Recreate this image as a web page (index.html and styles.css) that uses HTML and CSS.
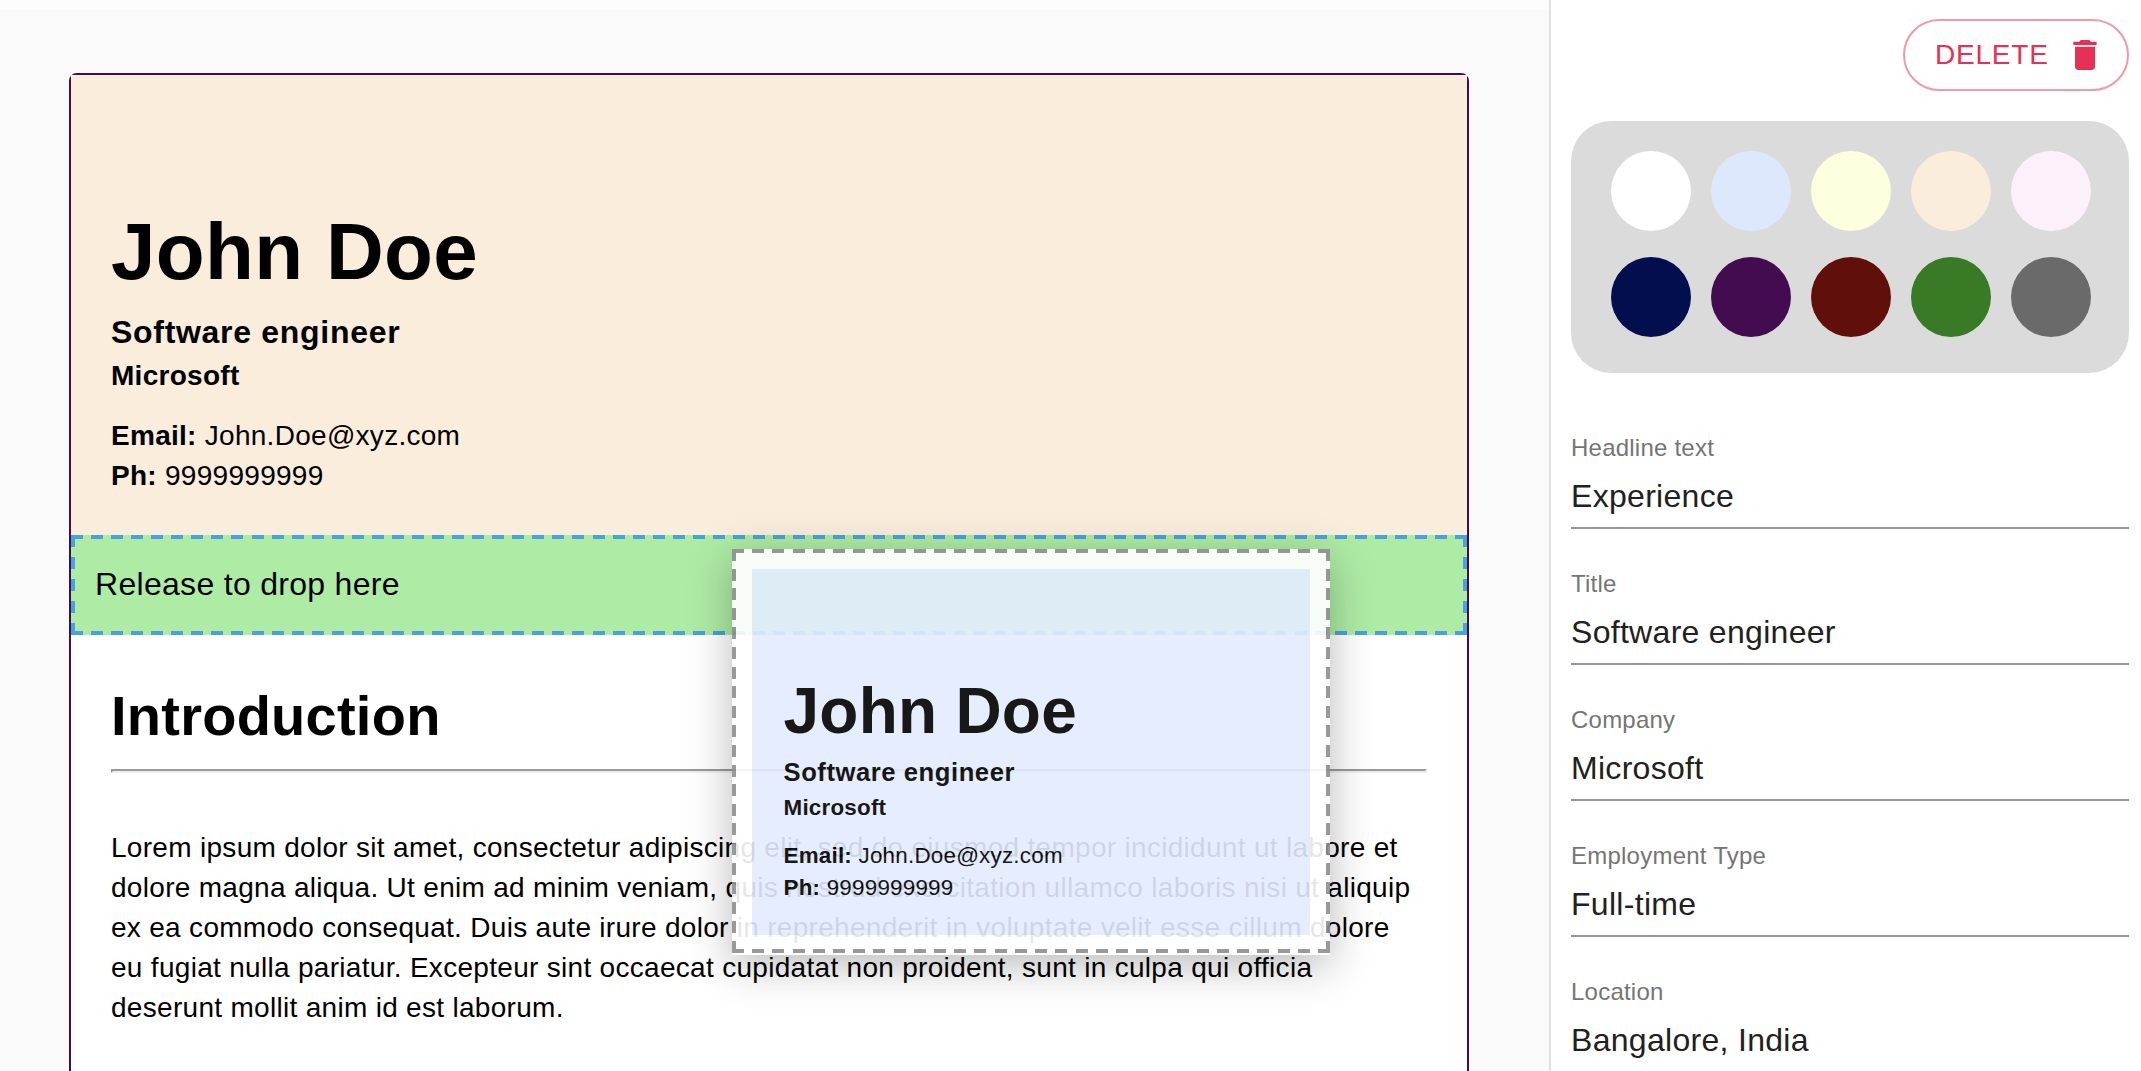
FILE: index.html
```html
<!DOCTYPE html>
<html lang="en">
<head>
<meta charset="utf-8">
<title>Resume builder</title>
<link rel="stylesheet" href="styles.css">
</head>
<body>
<div class="app">
  <main class="workspace">
    <div class="topbar"></div>
    <article class="page">
      <header class="intro">
        <h1 class="name">John Doe</h1>
        <h2 class="role">Software engineer</h2>
        <h3 class="company">Microsoft</h3>
        <p class="contact"><b>Email:</b> John.Doe@xyz.com<br><b>Ph:</b> 9999999999</p>
      </header>
      <div class="dropzone">Release to drop here</div>
      <section class="section">
        <h2 class="section-title">Introduction</h2>
        <hr class="rule">
        <p class="body-text">Lorem ipsum dolor sit amet, consectetur adipiscing elit, sed do eiusmod tempor incididunt ut labore et dolore magna aliqua. Ut enim ad minim veniam, quis nostrud exercitation ullamco laboris nisi ut aliquip ex ea commodo consequat. Duis aute irure dolor in reprehenderit in voluptate velit esse cillum dolore eu fugiat nulla pariatur. Excepteur sint occaecat cupidatat non proident, sunt in culpa qui officia deserunt mollit anim id est laborum.</p>
      </section>
    </article>
    <div class="drag-preview">
      <div class="intro intro-small">
        <h1 class="name">John Doe</h1>
        <h2 class="role">Software engineer</h2>
        <h3 class="company">Microsoft</h3>
        <p class="contact"><b>Email:</b> John.Doe@xyz.com<br><b>Ph:</b> 9999999999</p>
      </div>
    </div>
  </main>
  <aside class="panel">
    <button class="delete" type="button">DELETE
      <svg class="delete-icon" viewBox="0 0 24 24"><path d="M6 19c0 1.1.9 2 2 2h8c1.1 0 2-.9 2-2V7H6v12zM19 4h-3.5l-1-1h-5l-1 1H5v2h14V4z"/></svg>
    </button>
    <div class="palette">
      <span class="swatch white"></span>
      <span class="swatch blue"></span>
      <span class="swatch yellow"></span>
      <span class="swatch peach"></span>
      <span class="swatch pink"></span>
      <span class="swatch navy"></span>
      <span class="swatch purple"></span>
      <span class="swatch maroon"></span>
      <span class="swatch green"></span>
      <span class="swatch gray"></span>
    </div>
    <div class="fields">
      <div class="field"><span class="label">Headline text</span><span class="value">Experience</span></div>
      <div class="field"><span class="label">Title</span><span class="value">Software engineer</span></div>
      <div class="field"><span class="label">Company</span><span class="value">Microsoft</span></div>
      <div class="field"><span class="label">Employment Type</span><span class="value">Full-time</span></div>
      <div class="field"><span class="label">Location</span><span class="value">Bangalore, India</span></div>
    </div>
  </aside>
</div>
</body>
</html>
```
FILE: styles.css
```css
* { box-sizing: border-box; }

body {
  margin: 0;
  font-family: "Liberation Sans", Arial, sans-serif;
  color: #000;
  background: #fff;
}

h1, h2, h3, p { margin: 0; }

.app {
  display: flex;
  height: 1071px;
  overflow: hidden;
}

/* Workspace */
.workspace {
  position: relative;
  flex: 1;
  background: #fafafa;
}

.topbar {
  height: 9px;
  background: #fdfdfd;
}

.page {
  width: 1400px;
  height: 1200px;
  margin: 64px 0 0 69px;
  border: 2px solid #430c50;
  border-radius: 8px;
  background: #fff;
}

.intro {
  height: 460px;
  padding: 129px 40px 0;
  font-size: 28px;
  letter-spacing: 0.01em;
  background: #fbeddc;
}

.name {
  font-size: 2.857em;
  line-height: 1.2;
  letter-spacing: 0.004em;
}

.role {
  margin-top: 0.37em;
  font-size: 1.143em;
  line-height: 1.25;
  letter-spacing: 0.022em;
}

.company {
  margin-top: 0.16em;
  font-size: 1em;
  line-height: 1.4286;
}

.contact {
  margin-top: 0.714em;
  line-height: 1.4286;
}

/* Dashed outlines: 12px dashes, spaced to end with a full dash at each corner */
.dropzone {
  --dash: #49a2dc;
  --across: repeating-linear-gradient(90deg, var(--dash) 0 12px, transparent 12px 20.058px);
  --down: repeating-linear-gradient(180deg, var(--dash) 0 12px, transparent 12px 22px);
  display: flex;
  align-items: center;
  height: 100px;
  padding: 0 24px 2px;
  background:
    var(--across) 0 0 / 100% 4px no-repeat,
    var(--across) 0 100% / 100% 4px no-repeat,
    var(--down) 0 0 / 4px 100% no-repeat,
    var(--down) 100% 0 / 4px 100% no-repeat,
    #aeeca5;
  font-size: 32px;
  letter-spacing: 0.3px;
}

.section { padding: 47px 40px 0; }

.section-title {
  font-size: 56px;
  line-height: 68px;
  letter-spacing: 0.25px;
}

.rule {
  height: 4px;
  margin: 19px 0 55px;
  border: 2px solid;
  border-color: #9a9a9a #eee #eee #9a9a9a;
}

.body-text {
  font-size: 28px;
  line-height: 40px;
  letter-spacing: 0.3px;
}

.drag-preview {
  --dash: #8f8f8f;
  --across: repeating-linear-gradient(90deg, var(--dash) 0 12px, transparent 12px 20.207px);
  --down: repeating-linear-gradient(180deg, var(--dash) 0 12px, transparent 12px 19.6px);
  position: absolute;
  left: 732px;
  top: 549px;
  width: 598px;
  height: 406px;
  padding: 20px;
  background:
    var(--across) 0 0 / 100% 4px no-repeat,
    var(--across) 0 400px / 100% 4px no-repeat,
    var(--down) 0 0 / 4px 404px no-repeat,
    var(--down) 100% 0 / 4px 404px no-repeat,
    #fff;
  box-shadow: 0 10px 40px rgba(0, 0, 0, 0.3);
  opacity: 0.9;
}

.intro-small {
  height: 366px;
  padding: 104px 31.5px 0;
  font-size: 22.4px;
  background: #e4ecfe;
}

.intro-small .role { margin-top: 6px; }
.intro-small .company { margin-top: 4px; }

/* Side panel */
.panel {
  flex: none;
  width: 592px;
  padding: 19px 12px 0 20px;
  border-left: 2px solid #e0e0e0;
}

.delete {
  display: flex;
  align-items: center;
  justify-content: space-between;
  width: 226px;
  height: 72px;
  margin-left: auto;
  padding: 0 22px 0 30px;
  border: 2px solid #f198ac;
  border-radius: 36px;
  background: none;
  color: #e53058;
  font-family: inherit;
  font-size: 28px;
  letter-spacing: 0.8px;
}

.delete-icon {
  flex: none;
  width: 40px;
  height: 40px;
  fill: currentColor;
}

.palette {
  display: grid;
  grid-template-columns: repeat(5, 80px);
  gap: 26px 20px;
  height: 252px;
  margin-top: 30px;
  padding: 30px 40px 36px;
  border-radius: 40px;
  background: #dbdbdb;
}

.swatch {
  height: 80px;
  border-radius: 50%;
}

.white { background: #fff; }
.blue { background: #dde8fc; }
.yellow { background: #feffde; }
.peach { background: #fbeddc; }
.pink { background: #fcf1fb; }
.navy { background: #030e4f; }
.purple { background: #430c50; }
.maroon { background: #610f0a; }
.green { background: #387a25; }
.gray { background: #6a6a6a; }

.fields {
  display: flex;
  flex-direction: column;
  gap: 36px;
  margin-top: 56px;
}

.field {
  display: flex;
  flex-direction: column;
  height: 100px;
  border-bottom: 2px solid #949494;
}

.label {
  color: #757575;
  font-size: 24px;
  line-height: 38px;
  letter-spacing: 0.23px;
}

.value {
  margin-top: 10px;
  color: #212121;
  font-size: 32px;
  line-height: 38px;
  letter-spacing: 0.3px;
}
```
